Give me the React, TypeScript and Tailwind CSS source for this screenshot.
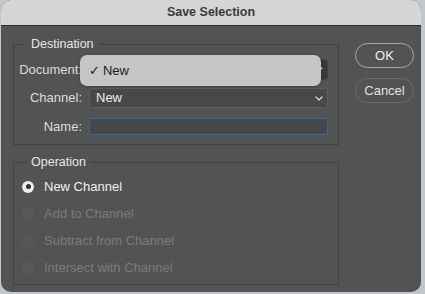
import React from "react";

function Chevron({ className = "" }: { className?: string }) {
  return (
    <svg width="8" height="5" viewBox="0 0 8 5" className={className}>
      <path d="M1 1 L4 4 L7 1" fill="none" stroke="#d8d8d8" strokeWidth="1.3" strokeLinecap="round" strokeLinejoin="round" />
    </svg>
  );
}

function Radio({ label, checked, disabled }: { label: string; checked?: boolean; disabled?: boolean }) {
  return (
    <div className="h-[27px] flex items-center pl-[8px]">
      {checked ? (
        <div className="w-[12px] h-[12px] rounded-full bg-[#ececec] flex items-center justify-center">
          <div className="w-[5px] h-[5px] rounded-full bg-[#2e2e2e]" />
        </div>
      ) : (
        <div className="w-[12px] h-[12px] rounded-full bg-[#575757] border border-[#5c5c5c]" />
      )}
      <span className={"ml-[10px] text-[13px] " + (disabled ? "text-[#7b7b7b]" : "text-[#f0f0f0]")}>{label}</span>
    </div>
  );
}

export default function App() {
  return (
    <div className="w-[425px] h-[294px] bg-[#c3c6cb] font-['Liberation_Sans',Arial,sans-serif]">
      <div className="ml-[1px] w-[420px] h-[292px] rounded-[10px] overflow-hidden bg-[#535353] flex flex-col">
        <div className="h-[26px] shrink-0 bg-[#d5d5d5] border-b border-[#2a2a2a] flex items-center justify-center">
          <span className="text-[12.5px] font-bold text-[#3a3a3a]">Save Selection</span>
        </div>
        <div className="flex">
          <div className="pl-[12px] w-[338px] shrink-0">
            <fieldset className="mt-[11px] w-[326px] border border-[#424242] pb-[9px]">
              <legend className="ml-[12px] px-[5px] text-[12.5px] leading-[15px] text-[#e6e6e6]">Destination</legend>
              <div className="pt-[7px] grid grid-cols-[68px_239px] gap-x-[7px] text-[13px]">
                <div className="h-[21px] flex items-center justify-end text-[#dcdcdc]">Document:</div>
                <div className="relative h-[21px] rounded-[3px] bg-[#383838] border border-[#444444] flex items-center justify-end pr-[4px]">
                  <Chevron />
                  <div className="absolute left-[-10px] top-[-5px] w-[241px] h-[31px] rounded-[7px] bg-[#c6c6c6] shadow-[0_1px_3px_rgba(0,0,0,0.25)] flex items-center pl-[9px] text-[#1c1c1c] text-[13px]">
                    <span className="font-['DejaVu_Sans',sans-serif] text-[13px] font-bold mr-[3px]">✓</span>
                    <span>New</span>
                  </div>
                </div>
                <div className="mt-[8px] h-[20px] flex items-center justify-end text-[#dcdcdc]">Channel:</div>
                <div className="mt-[8px] h-[20px] rounded-[3px] bg-[#484848] border border-[#5e5e5e] flex items-center justify-between pl-[6px] pr-[4px] text-[#ececec]">
                  <span>New</span>
                  <Chevron />
                </div>
                <div className="mt-[10px] h-[17px] flex items-center justify-end text-[#dcdcdc]">Name:</div>
                <div className="mt-[10px] h-[17px] bg-[#464646] border-[1.5px] border-[#2f66ad]" />
              </div>
            </fieldset>
            <fieldset className="mt-[10px] w-[326px] border border-[#424242] pb-[3px]">
              <legend className="ml-[12px] px-[5px] text-[12.5px] leading-[15px] text-[#e6e6e6]">Operation</legend>
              <div className="pt-[3px]">
                <Radio label="New Channel" checked />
                <Radio label="Add to Channel" disabled />
                <Radio label="Subtract from Channel" disabled />
                <Radio label="Intersect with Channel" disabled />
              </div>
            </fieldset>
          </div>
          <div className="ml-[16px] pt-[17px] flex flex-col gap-[10px]">
            <button className="w-[59px] h-[25px] rounded-full border-[1.5px] border-[#a9a9a9] text-[13px] text-[#f0f0f0] flex items-center justify-center">OK</button>
            <button className="w-[59px] h-[25px] rounded-full border-[1.5px] border-[#6b6b6b] text-[13px] text-[#e2e2e2] flex items-center justify-center">Cancel</button>
          </div>
        </div>
      </div>
    </div>
  );
}
